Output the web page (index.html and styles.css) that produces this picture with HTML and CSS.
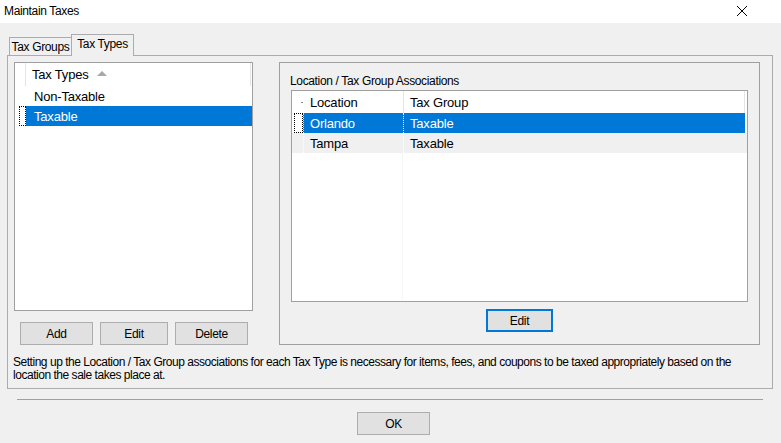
FILE: index.html
```html
<!DOCTYPE html>
<html lang="en">
<head>
    <meta charset="UTF-8">
    <meta name="viewport" content="width=device-width, initial-scale=1.0">
    <title>Maintain Taxes</title>
    <link rel="stylesheet" href="styles.css">
</head>
<body>
    <div class="titlebar">
        <span class="title">Maintain Taxes</span>
        <svg class="close" width="12" height="12" viewBox="0 0 12 12">
            <path d="M1 1 L11 11 M11 1 L1 11" stroke="#000" stroke-width="1"/>
        </svg>
    </div>

    <div class="dialog">
        <div class="tabs">
            <div class="tab">Tax Groups</div>
            <div class="tab active">Tax Types</div>
        </div>

        <div class="tab-page">
            <div class="page-top">
                <div class="left-col">
                    <div class="list types-list">
                        <div class="list-header">
                            <span class="gutter"></span>
                            <span class="hdr-cell">Tax Types <span class="sort-arrow"></span></span>
                        </div>
                        <div class="row">
                            <span class="gutter"></span>
                            <span class="cell">Non-Taxable</span>
                        </div>
                        <div class="row selected">
                            <span class="gutter"><span class="focus"></span></span>
                            <span class="cell">Taxable</span>
                        </div>
                    </div>
                    <div class="btn-row">
                        <button class="btn btn-add">Add</button>
                        <button class="btn btn-edit">Edit</button>
                        <button class="btn btn-add">Delete</button>
                    </div>
                </div>

                <div class="group-box">
                    <div class="group-label">Location / Tax Group Associations</div>
                    <div class="list assoc-list">
                        <div class="list-header">
                            <span class="gutter"><span class="tick"></span></span>
                            <span class="col-loc">Location</span>
                            <span class="col-grp">Tax Group</span>
                        </div>
                        <div class="row selected">
                            <span class="gutter"><span class="focus"></span></span>
                            <span class="col-loc">Orlando</span>
                            <span class="col-grp">Taxable</span>
                        </div>
                        <div class="row alt">
                            <span class="gutter"></span>
                            <span class="col-loc">Tampa</span>
                            <span class="col-grp">Taxable</span>
                        </div>
                        <div class="filler">
                            <span class="filler-line"></span>
                        </div>
                    </div>
                    <div class="group-actions">
                        <button class="btn focused">Edit</button>
                    </div>
                </div>
            </div>

            <p class="note">Setting up the Location / Tax Group associations for each Tax Type is necessary for items, fees, and coupons to be taxed appropriately based on the<br>location the sale takes place at.</p>
        </div>

        <div class="separator"></div>

        <div class="footer">
            <button class="btn btn-ok">OK</button>
        </div>
    </div>
</body>
</html>
```

FILE: styles.css
```css
body {
    margin: 0;
    background-color: #f0f0f0;
    font-family: "Liberation Sans", Arial, sans-serif;
    font-size: 12px;
    letter-spacing: -0.35px;
    color: #000;
    width: 781px;
    height: 443px;
    overflow: hidden;
}
.titlebar {
    height: 23px;
    background: #fff;
    display: flex;
    align-items: center;
    justify-content: space-between;
    padding: 0 33px 0 4px;
}
.title {
    margin-top: -2px;
}
.close {
    margin-top: -2px;
}
.dialog {
    padding: 11px 0 0 7px;
}
.tabs {
    display: flex;
    align-items: flex-end;
    padding-left: 2px;
    height: 21px;
}
.tab {
    width: 61px;
    height: 17px;
    border: 1px solid #acacac;
    border-bottom: none;
    background: #f0f0f0;
    text-align: center;
    line-height: 18px;
    white-space: nowrap;
}
.tab.active {
    height: 21px;
    line-height: 19px;
    margin-bottom: -1px;
    position: relative;
    z-index: 1;
}
.tab + .tab {
    margin-left: -1px;
}
.tab-page {
    width: 752px;
    height: 320px;
    border: 1px solid #acacac;
    padding: 6px 6px 6px 6px;
}
.page-top {
    display: flex;
    gap: 26px;
}
.left-col {
    width: 239px;
}
.list {
    background: #fff;
    border: 1px solid #a0a0a0;
    box-sizing: border-box;
    font-size: 13px;
    letter-spacing: -0.2px;
    overflow: hidden;
}
.types-list {
    height: 249px;
}
.list-header {
    display: flex;
    height: 23px;
    align-items: center;
}
.row {
    display: flex;
    height: 20px;
    align-items: center;
}
.gutter {
    width: 11px;
    height: 100%;
    flex: none;
    box-sizing: border-box;
    display: flex;
    align-items: center;
    justify-content: center;
}
.types-list .list-header .gutter {
    border-right: 1px solid #e5e5e5;
}
.types-list .hdr-cell {
    flex: 1;
    height: 100%;
    display: flex;
    align-items: center;
    padding-left: 6px;
    border-right: 1px solid #e5e5e5;
    margin-right: 1px;
}
.sort-arrow {
    display: inline-block;
    width: 0;
    height: 0;
    border-left: 5px solid transparent;
    border-right: 5px solid transparent;
    border-bottom: 5px solid #a8a8a8;
    margin-left: 8px;
    margin-top: -2px;
}
.cell {
    padding-left: 8px;
}
.row.selected .cell,
.row.selected .col-loc,
.row.selected .col-grp {
    background: #0078d7;
    color: #fff;
}
.types-list .row.selected .cell {
    flex: 1;
    height: 100%;
    display: flex;
    align-items: center;
}
.focus {
    width: 9px;
    height: 20px;
    border: 1px dotted #000;
    box-sizing: border-box;
    margin-left: 4px;
}
.btn-row {
    display: flex;
    gap: 7px;
    padding: 11px 0 0 6px;
}
.btn {
    font-family: "Liberation Sans", Arial, sans-serif;
    font-size: 12px;
    letter-spacing: -0.35px;
    color: #000;
    background: #e1e1e1;
    border: 1px solid #adadad;
    height: 23px;
    padding: 0;
}
.btn-add {
    width: 73px;
}
.btn-edit {
    width: 68px;
}
.group-box {
    width: 481px;
    height: 283px;
    border: 1px solid #a0a0a0;
    box-sizing: border-box;
    padding: 0 11px;
}
.group-label {
    padding-top: 11px;
    height: 16px;
    margin-left: -1px;
}
.assoc-list {
    height: 212px;
}
.assoc-list .col-loc {
    width: 100px;
    height: 100%;
    display: flex;
    align-items: center;
    padding-left: 6px;
    box-sizing: border-box;
    border-left: 1px dotted #e0e0e0;
}
.assoc-list .col-grp {
    flex: 1;
    height: 100%;
    display: flex;
    align-items: center;
    padding-left: 6px;
    box-sizing: border-box;
    border-left: 1px solid #e5e5e5;
    margin-right: 2px;
}
.assoc-list .list-header .col-loc {
    border-left: none;
    padding-left: 7px;
}
.assoc-list .list-header .col-grp {
    border-right: 1px solid #e5e5e5;
}
.assoc-list .row .col-grp {
    border-left: 1px dotted #fff;
}
.assoc-list .row.alt {
    background: #f0f0f0;
}
.assoc-list .row.alt .col-loc {
    border-left: 1px dotted #fff;
}
.assoc-list .list-header {
    height: 22px;
}
.tick {
    width: 2px;
    height: 1px;
    background: #888;
    margin-left: 8px;
}
.assoc-list .focus {
    margin-left: 2px;
}
.filler {
    height: 168px;
    display: flex;
}
.filler-line {
    width: 1px;
    height: 100%;
    margin-left: 110px;
    background: #f7f7f7;
}
.group-actions {
    display: flex;
    justify-content: center;
    padding-top: 7px;
}
.btn.focused {
    width: 67px;
    border: 2px solid #0078d7;
}
.note {
    margin: 11px 0 0 -1px;
    line-height: 13px;
    white-space: nowrap;
    letter-spacing: -0.47px;
}
.separator {
    width: 746px;
    height: 1px;
    margin: 10px 0 0 10px;
    background: #a0a0a0;
}
.footer {
    display: flex;
    justify-content: center;
    padding: 12px 0 0 0;
    width: 773px;
}
.btn-ok {
    width: 73px;
    height: 23px;
}
```
